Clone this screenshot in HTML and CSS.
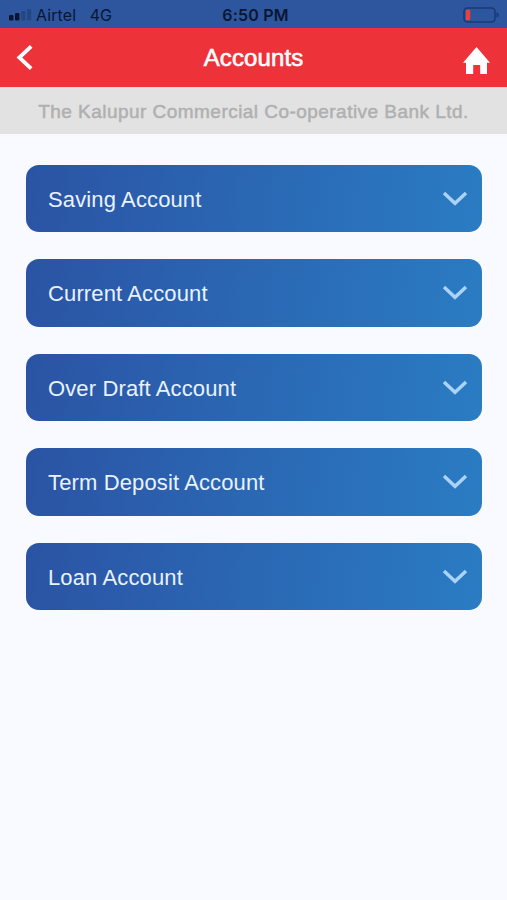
FILE: index.html
```html
<!DOCTYPE html>
<html lang="en">
<head>
<meta charset="utf-8">
<title>Accounts</title>
<link rel="stylesheet" href="styles.css">
</head>
<body>
<div class="status">
  <div class="carrier">
    <svg width="24" height="12" viewBox="0 0 24 12"><rect x="0" y="6" width="4.4" height="5.5" rx="1.2" fill="#0a1530"/><rect x="6" y="4" width="4.4" height="7.5" rx="1.2" fill="#0a1530"/><rect x="12.2" y="2" width="4.2" height="9.5" rx="1.2" fill="#244782"/><rect x="18" y="0" width="4.2" height="11.5" rx="1.2" fill="#244782"/></svg>
    <span class="name">Airtel</span><span>4G</span>
  </div>
  <div class="time">6:50 PM</div>
  <svg class="battery" width="37" height="16" viewBox="0 0 37 16"><rect x="1" y="1" width="31" height="14" rx="3.5" fill="none" stroke="#173a77" stroke-width="1.6"/><rect x="2.8" y="2.8" width="4.4" height="10.4" rx="1" fill="#e9403c"/><path d="M33.5 5.5c3 .6 3 4.4 0 5z" fill="#173a77"/></svg>
</div>
<header class="bar">
  <svg class="back" width="18" height="28" viewBox="0 0 18 28"><path d="M15.2 2.3 3.3 13.5l11.9 11.2" fill="none" stroke="#fff" stroke-width="3.8"/></svg>
  <h1>Accounts</h1>
  <svg class="home" width="28" height="28" viewBox="0 0 28 28"><path d="M13.5 0 27 15.8H24V27h-6.8v-9h-7v9H3V15.8H0Z" fill="#fff"/></svg>
</header>
<div class="bank"><span>The Kalupur Commercial Co-operative Bank Ltd.</span></div>
<main class="list">
  <div class="card"><span>Saving Account</span><svg width="26" height="17" viewBox="0 0 26 17"><path d="m2 3 11 10.3L24 3" /></svg></div>
  <div class="card"><span>Current Account</span><svg width="26" height="17" viewBox="0 0 26 17"><path d="m2 3 11 10.3L24 3" /></svg></div>
  <div class="card"><span>Over Draft Account</span><svg width="26" height="17" viewBox="0 0 26 17"><path d="m2 3 11 10.3L24 3" /></svg></div>
  <div class="card"><span>Term Deposit Account</span><svg width="26" height="17" viewBox="0 0 26 17"><path d="m2 3 11 10.3L24 3" /></svg></div>
  <div class="card"><span>Loan Account</span><svg width="26" height="17" viewBox="0 0 26 17"><path d="m2 3 11 10.3L24 3" /></svg></div>
</main>
</body>
</html>
```
FILE: styles.css
```css
* { box-sizing: border-box; }
body {
  margin: 0;
  min-height: 900px;
  background: #f8faff;
  font-family: "Liberation Sans", Arial, sans-serif;
}
svg { display: block; flex: none; }
.status {
  height: 28px;
  padding: 2px 7px 0 9px;
  display: grid;
  grid-template-columns: 1fr auto 1fr;
  align-items: center;
  background: #2d569f;
  color: #0a1632;
  font-family: Inter, sans-serif;
  font-size: 16px;
}
.carrier { display: flex; align-items: center; }
.name { margin: 0 13.5px 0 3px; letter-spacing: 0.1px; }
.time { font-weight: 600; letter-spacing: 0.2px; padding-left: 2px; }
.battery { justify-self: end; margin-top: -1px; }
.bar {
  height: 59px;
  padding: 0 16px;
  display: grid;
  grid-template-columns: 1fr auto 1fr;
  align-items: center;
  background: #ee3239;
  color: #fff;
}
.bar h1 {
  margin: 1px 0 0;
  font-size: 24px;
  font-weight: 400;
  line-height: 28px;
  letter-spacing: 0.1px;
  -webkit-text-stroke: 0.6px #fff;
}
.home { justify-self: end; margin-top: 6px; }
.bank {
  height: 47.4px;
  padding-top: 2px;
  display: flex;
  align-items: center;
  justify-content: center;
  border-top: 1px solid #f0d8d8;
  background: #e2e2e2;
  color: #b0b0b0;
  font-size: 19px;
  white-space: nowrap;
  letter-spacing: 0.46px;
  -webkit-text-stroke: 0.5px #b0b0b0;
}
.list {
  padding: 30.3px 25px 0 26px;
  display: grid;
  gap: 27.3px;
}
.card {
  height: 67.3px;
  padding: 2.6px 14px 0 22px;
  display: flex;
  align-items: center;
  justify-content: space-between;
  border-radius: 13px;
  background: linear-gradient(97deg, #2b53a4, #2a7cc3);
  color: #e9f2ff;
  font-size: 22px;
  letter-spacing: 0.13px;
}
.card svg { margin-top: -3px; }
.card path { fill: none; stroke: #add2f8; stroke-width: 3.4; }
```
